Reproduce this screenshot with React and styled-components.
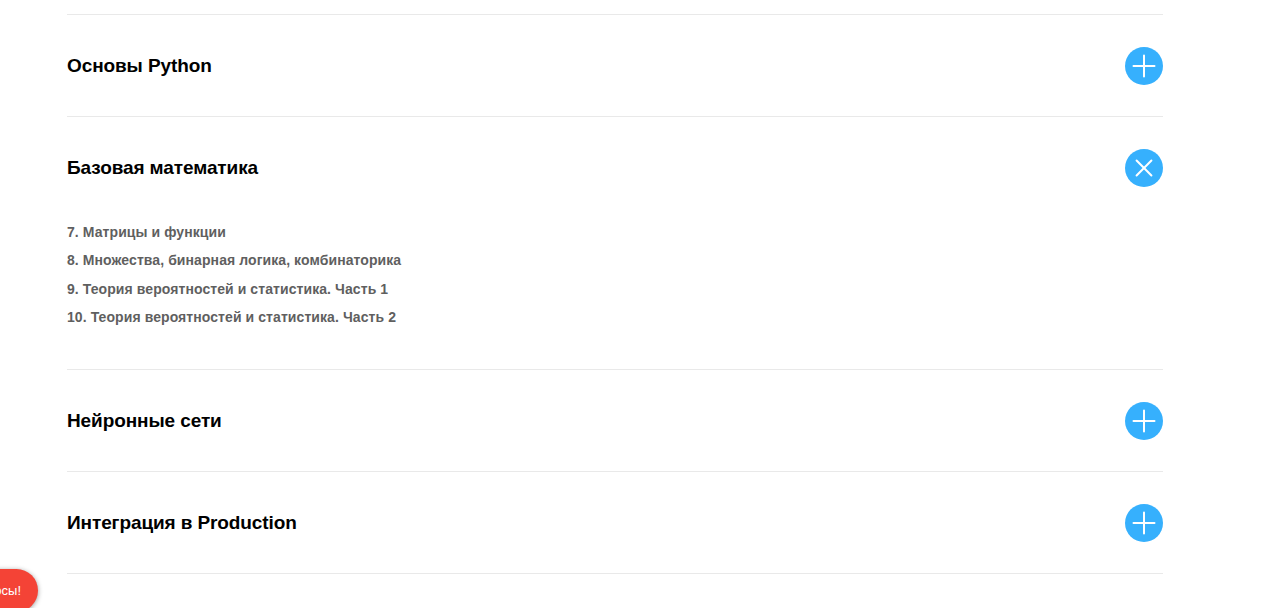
import React from "react";
import styled, { createGlobalStyle } from "styled-components";

const GlobalStyle = createGlobalStyle`
  * { box-sizing: border-box; }
  body { margin: 0; background: #fff; overflow: hidden; font-family: "Liberation Sans", Arial, sans-serif; }
`;
const Page = styled.main`
  position: relative;
  height: 608px;
  overflow: hidden;
  padding: 14px 117px 0 67px;
`;
const Section = styled.section`
  border-top: 1px solid #e9e9e9;
  &:last-of-type { border-bottom: 1px solid #e9e9e9; }
`;
const Header = styled.div`
  display: flex;
  align-items: flex-start;
  justify-content: space-between;
  height: 101px;
  padding-top: 32px;
`;
const Title = styled.h2`
  margin: 7px 0 0;
  font-size: 19px;
  line-height: 24px;
  font-weight: 700;
  color: #000;
  letter-spacing: -0.1px;
`;
const Toggle = styled.button`
  display: block;
  width: 38px;
  height: 38px;
  padding: 0;
  border: 0;
  border-radius: 50%;
  background: #36b0fd;
  svg { display: block; transform: rotate(${(p) => (p.$open ? 45 : 0)}deg); }
`;
const Lessons = styled.ul`
  list-style: none;
  margin: 0;
  height: 151px;
  padding: 0;
  font-size: 14px;
  line-height: 28.35px;
  font-weight: 700;
  color: #5f5f5f;
  letter-spacing: 0.08px;
`;
const ChatButton = styled.div`
  position: absolute;
  left: -120px;
  top: 569px;
  width: 158px;
  height: 43px;
  padding-right: 17px;
  border-radius: 22px;
  background: #f44336;
  box-shadow: 0 1px 5px rgba(0, 0, 0, 0.4);
  color: #fff;
  font-size: 13px;
  line-height: 43px;
  text-align: right;
  white-space: nowrap;
`;

const sections = [
  { title: "Основы Python" },
  {
    title: "Базовая математика",
    lessons: [
      "7. Матрицы и функции",
      "8. Множества, бинарная логика, комбинаторика",
      "9. Теория вероятностей и статистика. Часть 1",
      "10. Теория вероятностей и статистика. Часть 2",
    ],
  },
  { title: "Нейронные сети" },
  { title: "Интеграция в Production" },
];

export default function App() {
  return (
    <Page>
      <GlobalStyle />
      {sections.map(({ title, lessons }) => (
        <Section key={title}>
          <Header>
            <Title>{title}</Title>
            <Toggle $open={Boolean(lessons)} aria-label={title}>
              <svg width="38" height="38" viewBox="0 0 38 38" fill="none" stroke="#fff" strokeWidth="2" strokeLinecap="round">
                <path d="M19 8.5v21M8.5 19h21" />
              </svg>
            </Toggle>
          </Header>
          {lessons && (
            <Lessons>
              {lessons.map((lesson) => <li key={lesson}>{lesson}</li>)}
            </Lessons>
          )}
        </Section>
      ))}
      <ChatButton>Задать вопросы!</ChatButton>
    </Page>
  );
}
